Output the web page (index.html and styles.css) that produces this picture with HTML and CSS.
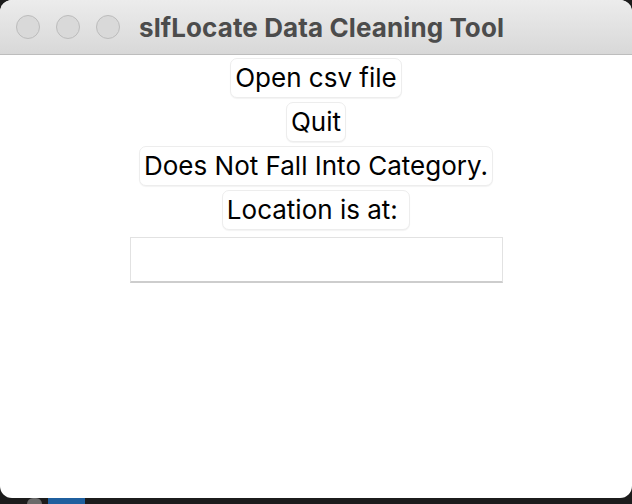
FILE: index.html
```html
<!DOCTYPE html>
<html>
<head>
<meta charset="utf-8">
<link rel="stylesheet" href="styles.css">
</head>
<body>
<div class="window">
  <div class="titlebar">
    <div class="lights">
      <span class="light"></span>
      <span class="light"></span>
      <span class="light"></span>
    </div>
    <div class="title">slfLocate Data Cleaning Tool</div>
  </div>
  <div class="content">
    <button class="btn">Open csv file</button>
    <button class="btn">Quit</button>
    <button class="btn">Does Not Fall Into Category.</button>
    <button class="btn">Location is at:&nbsp;</button>
    <input class="entry" type="text">
  </div>
</div>
<div class="dock">
  <span class="dock-gray"></span>
  <span class="dock-blue"></span>
</div>
</body>
</html>
```
FILE: styles.css
```css
html, body {
  margin: 0;
  padding: 0;
}
body {
  width: 632px;
  height: 504px;
  background: #1c1c1c;
  overflow: hidden;
  font-family: "Inter", "Liberation Sans", sans-serif;
}
.window {
  height: 498px;
  background: #ffffff;
  border-radius: 12px;
  overflow: hidden;
  display: flex;
  flex-direction: column;
}
.titlebar {
  height: 55px;
  flex: none;
  box-sizing: border-box;
  background: linear-gradient(#ececec, #d8d8d8);
  border-bottom: 1px solid #bdbdbd;
  display: flex;
  align-items: center;
  padding-left: 16px;
}
.lights {
  display: flex;
  gap: 16px;
}
.light {
  width: 22px;
  height: 22px;
  border-radius: 50%;
  background: #d9d9d9;
  border: 1px solid #bcbcbc;
}
.title {
  margin-left: 19px;
  font-weight: 700;
  font-size: 26px;
  letter-spacing: 0.1px;
  color: #4c4c4c;
}
.content {
  display: flex;
  flex-direction: column;
  align-items: center;
  gap: 4px;
  padding-top: 3px;
}
.btn {
  height: 40px;
  box-sizing: border-box;
  padding: 0 4px;
  font-family: "Inter", "Liberation Sans", sans-serif;
  font-size: 26px;
  line-height: 38px;
  color: #000;
  background: #fff;
  border: 1px solid #ededed;
  border-radius: 7px;
  box-shadow: 0 1px 1px rgba(0,0,0,0.05);
}
.entry {
  margin-top: 3px;
  width: 373px;
  height: 46px;
  box-sizing: border-box;
  border: 1px solid #e2e2e2;
  border-bottom: 2px solid #cdcdcd;
  background: #fff;
  outline: none;
}
.dock {
  height: 6px;
  display: flex;
  gap: 6px;
  padding-left: 27px;
}
.dock-gray {
  width: 15px;
  height: 6px;
  background: #6a6a6a;
  border-radius: 7px 7px 0 0;
}
.dock-blue {
  width: 37px;
  height: 6px;
  background: #1f5f9e;
}
```
